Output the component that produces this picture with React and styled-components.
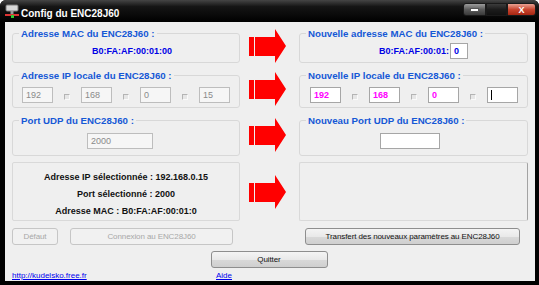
import styled, { createGlobalStyle } from "styled-components"

const GlobalStyle = createGlobalStyle`
  html, body {
    margin: 0;
    padding: 0;
    background: #ffffff;
  }
  body {
    font-family: "Liberation Sans", Arial, sans-serif;
  }
`

const Window = styled.div`
  width: 539px;
  height: 285px;
  box-sizing: border-box;
  display: flex;
  flex-direction: column;
  background: #000;
  border-radius: 6px 6px 0 0;
  overflow: hidden;
`

const TitleBar = styled.div`
  height: 22px;
  flex: none;
  display: flex;
  align-items: center;
  padding: 0 3px 0 5px;
  background: linear-gradient(#454545 0, #151515 30%, #000 100%);
  color: #fff;
  font-size: 10px;
  font-weight: bold;

  .title {
    margin-left: 2px;
    padding-top: 4px;
  }
`

const WinButtons = styled.div`
  margin-left: auto;
  align-self: flex-start;
  margin-top: 3px;
  display: flex;
`

const WinButton = styled.div`
  height: 13px;
  width: ${p => p.$w}px;
  box-sizing: border-box;
  border: 1px solid #1a1a1a;
  display: flex;
  align-items: center;
  justify-content: center;
  color: #fff;
  font-size: 9px;
  font-weight: bold;
  background: ${p =>
    p.$kind === "close"
      ? "linear-gradient(#e9a293, #c9452f 50%, #a52612)"
      : p.$kind === "min"
      ? "linear-gradient(#9c9c9c, #5a5a5a 50%, #3a3a3a)"
      : "linear-gradient(#3c3c3c, #1c1c1c 50%, #111)"};
  border-radius: ${p => (p.$kind === "min" ? "3px 0 0 3px" : p.$kind === "close" ? "0 3px 3px 0" : "0")};

  .dash {
    width: 7px;
    height: 2px;
    background: #fff;
    border: 1px solid #555;
    margin-top: 1px;
  }
`

const Body = styled.div`
  flex: 1;
  margin: 0 4px 5px 5px;
  background: #efefef;
  padding: 5px 8px 0 7px;
  display: flex;
  flex-direction: column;
  font-size: 9px;
`

const Grid = styled.div`
  display: grid;
  grid-template-columns: 228px 59px 229px;
  row-gap: 6px;
`

const Group = styled.fieldset`
  margin: 0;
  padding: ${p => p.$pad};
  min-width: 0;
  border: 1px solid #d8d8d8;
  border-radius: 3px;
  display: flex;
  align-items: center;
`

const Legend = styled.legend`
  margin-left: 6px;
  padding: 0 2px;
  height: 13px;
  line-height: 13px;
  color: #1558d6;
  font-weight: bold;
  font-size: 9.7px;
`

const MacValue = styled.div`
  height: 17px;
  display: flex;
  align-items: center;
  padding-left: 79px;
  color: #0000e6;
  font-weight: bold;
`

const TextBox = styled.div`
  width: ${p => p.$w}px;
  height: 16px;
  box-sizing: border-box;
  border: 1px solid ${p => (p.$disabled ? "#bdbdbd" : "#a6a6a6")};
  background: ${p => (p.$disabled ? "#f6f6f6" : "#fff")};
  color: ${p => p.$color || "#8a8a8a"};
  font-weight: ${p => (p.$bold ? "bold" : "normal")};
  display: flex;
  align-items: center;
  padding-left: 3px;
  margin-left: ${p => p.$ml || 0}px;
`

const Caret = styled.span`
  width: 1px;
  height: 10px;
  background: #000;
`

const IpRow = styled.div`
  display: flex;
  align-items: flex-end;
  gap: 11px;
  padding-left: ${p => p.$left}px;
`

const Check = styled.span`
  width: 6px;
  height: 6px;
  box-sizing: border-box;
  margin-bottom: 3px;
  border-top: 1px solid #b4b4b4;
  border-left: 1px solid #b4b4b4;
  border-bottom: 1px solid #fafafa;
  border-right: 1px solid #fafafa;
  background: #e6e6e6;
`

const ArrowCell = styled.div`
  align-self: center;
  padding-left: 9px;
  display: flex;
  margin-top: ${p => p.$mt || 0}px;
`

const InfoBox = styled.div`
  height: 59px;
  box-sizing: border-box;
  border: 1px solid #d9d9d9;
  border-right-color: ${p => (p.$shade ? "#a3a3a3" : "#d9d9d9")};
  border-radius: 2px;
  padding-top: 6px;
  display: flex;
  flex-direction: column;
  align-items: center;
  color: #111;
  font-weight: bold;

  div {
    height: 17px;
    line-height: 17px;
  }
`

const ButtonRow = styled.div`
  display: grid;
  grid-template-columns: 228px 59px 229px;
  margin-top: 7px;
`

const ButtonPair = styled.div`
  display: flex;
  gap: 12px;
`

const Button = styled.div`
  width: ${p => p.$w}px;
  height: 17px;
  box-sizing: border-box;
  margin-left: ${p => p.$ml || 0}px;
  border: 1px solid ${p => (p.$disabled ? "#c6c6c6" : "#8e8e8e")};
  border-radius: 3px;
  background: ${p => (p.$disabled ? "#f1f1f1" : "linear-gradient(#f4f4f4, #e9e9e9 50%, #d9d9d9 51%, #cfcfcf)")};
  color: ${p => (p.$disabled ? "#a8a8a8" : "#111")};
  font-size: 8px;
  letter-spacing: -0.1px;
  display: flex;
  align-items: center;
  justify-content: center;
`

const QuitRow = styled.div`
  display: flex;
  justify-content: center;
  margin-top: 6px;
  padding-right: 1px;
`

const LinkRow = styled.div`
  display: grid;
  grid-template-columns: 204px auto;
  height: 12px;
  align-items: center;
  margin-top: 1px;
  font-size: 8px;

  a {
    color: #0000ee;
    text-decoration: underline;
  }
`

const Arrow = () => (
  <svg width="37" height="34" viewBox="0 0 37 34">
    <rect x="0" y="8" width="5" height="19" fill="#ff0000" />
    <path d="M6 8 H26 V0 L37 17 L26 34 V27 H6 Z" fill="#ff0000" />
  </svg>
)

const AppIcon = () => (
  <svg width="14" height="14" viewBox="0 0 14 14">
    <rect x="1" y="1" width="12" height="6" rx="1" fill="#d8d8d8" stroke="#7a7a7a" />
    <rect x="5.5" y="7" width="3" height="3" fill="#9a9a9a" />
    <rect x="0" y="10" width="14" height="2" fill="#d33" />
    <rect x="6" y="11" width="3" height="3" fill="#3c3" />
  </svg>
)

const ipBoxes = (values, props) =>
  values.flatMap((v, i) => {
    const box = (
      <TextBox key={"b" + i} $w={31} {...props}>
        {v === null ? <Caret /> : v}
      </TextBox>
    )
    return i < values.length - 1 ? [box, <Check key={"c" + i} />] : [box]
  })

export default function App() {
  return (
    <>
      <GlobalStyle />
      <Window>
        <TitleBar>
          <AppIcon />
          <span className="title">Config du ENC28J60</span>
          <WinButtons>
            <WinButton $kind="min" $w={23}>
              <span className="dash" />
            </WinButton>
            <WinButton $kind="max" $w={21} />
            <WinButton $kind="close" $w={29}>
              X
            </WinButton>
          </WinButtons>
        </TitleBar>

        <Body>
          <Grid>
            <Group $pad="2px 0 3px">
              <Legend>Adresse MAC du ENC28J60 :</Legend>
              <MacValue>B0:FA:AF:00:01:00</MacValue>
            </Group>
            <ArrowCell $mt={2}>
              <Arrow />
            </ArrowCell>
            <Group $pad="2px 0 3px">
              <Legend>Nouvelle adresse MAC du ENC28J60 :</Legend>
              <MacValue>
                B0:FA:AF:00:01:
                <TextBox $w={18} $color="#0000e6" $bold $ml={1}>
                  0
                </TextBox>
              </MacValue>
            </Group>

            <Group $pad="5px 0 4px">
              <Legend>Adresse IP locale du ENC28J60 :</Legend>
              <IpRow $left={9}>{ipBoxes(["192", "168", "0", "15"], { $disabled: true })}</IpRow>
            </Group>
            <ArrowCell>
              <Arrow />
            </ArrowCell>
            <Group $pad="5px 0 4px">
              <Legend>Nouvelle IP locale du ENC28J60 :</Legend>
              <IpRow $left={10}>{ipBoxes(["192", "168", "0", null], { $color: "#ff00ff", $bold: true })}</IpRow>
            </Group>

            <Group $pad="6px 0 6px">
              <Legend>Port UDP du ENC28J60 :</Legend>
              <TextBox $w={66} $disabled $ml={74}>
                2000
              </TextBox>
            </Group>
            <ArrowCell>
              <Arrow />
            </ArrowCell>
            <Group $pad="6px 0 6px">
              <Legend>Nouveau Port UDP du ENC28J60 :</Legend>
              <TextBox $w={60} $ml={80} />
            </Group>

            <InfoBox>
              <div>Adresse IP sélectionnée : 192.168.0.15</div>
              <div>Port sélectionné : 2000</div>
              <div>Adresse MAC : B0:FA:AF:00:01:0</div>
            </InfoBox>
            <ArrowCell>
              <Arrow />
            </ArrowCell>
            <InfoBox $shade />
          </Grid>

          <ButtonRow>
            <ButtonPair>
              <Button $w={46} $disabled>
                Défaut
              </Button>
              <Button $w={163} $disabled>
                Connexion au ENC28J60
              </Button>
            </ButtonPair>
            <span />
            <Button $w={215} $ml={6}>
              Transfert des nouveaux paramètres au ENC28J60
            </Button>
          </ButtonRow>

          <QuitRow>
            <Button $w={117}>Quitter</Button>
          </QuitRow>

          <LinkRow>
            <a href="#">http://kudelsko.free.fr</a>
            <a href="#">Aide</a>
          </LinkRow>
        </Body>
      </Window>
    </>
  )
}
